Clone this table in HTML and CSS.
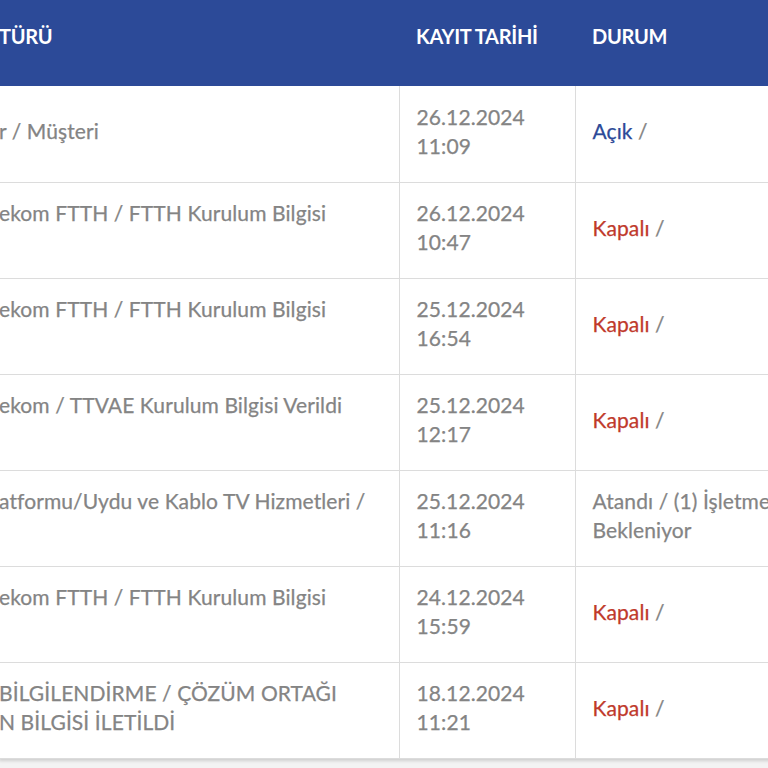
FILE: index.html
```html
<!DOCTYPE html>
<html lang="tr">
<head>
<meta charset="utf-8">
<link rel="stylesheet" href="styles.css">
</head>
<body>
<div class="viewport">
<table class="records">
  <colgroup>
    <col class="c-type">
    <col class="c-date">
    <col class="c-status">
  </colgroup>
  <thead>
    <tr>
      <th>TÜRÜ</th>
      <th>KAYIT TARİHİ</th>
      <th>DURUM</th>
    </tr>
  </thead>
  <tbody>
    <tr>
      <td class="type">r / Müşteri</td>
      <td class="date">26.12.2024<br>11:09</td>
      <td class="status"><span class="open">Açık</span> /</td>
    </tr>
    <tr>
      <td class="type">ekom FTTH / FTTH Kurulum Bilgisi<br>&nbsp;</td>
      <td class="date">26.12.2024<br>10:47</td>
      <td class="status"><span class="closed">Kapalı</span> /</td>
    </tr>
    <tr>
      <td class="type">ekom FTTH / FTTH Kurulum Bilgisi<br>&nbsp;</td>
      <td class="date">25.12.2024<br>16:54</td>
      <td class="status"><span class="closed">Kapalı</span> /</td>
    </tr>
    <tr>
      <td class="type">ekom / TTVAE Kurulum Bilgisi Verildi<br>&nbsp;</td>
      <td class="date">25.12.2024<br>12:17</td>
      <td class="status"><span class="closed">Kapalı</span> /</td>
    </tr>
    <tr>
      <td class="type">atformu/Uydu ve Kablo TV Hizmetleri /<br>&nbsp;</td>
      <td class="date">25.12.2024<br>11:16</td>
      <td class="status">Atandı / (1) İşletme<br>Bekleniyor</td>
    </tr>
    <tr>
      <td class="type">ekom FTTH / FTTH Kurulum Bilgisi<br>&nbsp;</td>
      <td class="date">24.12.2024<br>15:59</td>
      <td class="status"><span class="closed">Kapalı</span> /</td>
    </tr>
    <tr>
      <td class="type">BİLGİLENDİRME / ÇÖZÜM ORTAĞI<br>N BİLGİSİ İLETİLDİ</td>
      <td class="date">18.12.2024<br>11:21</td>
      <td class="status"><span class="closed">Kapalı</span> /</td>
    </tr>
  </tbody>
</table>
</div>
</body>
</html>
```

FILE: styles.css
```css
html, body {
  margin: 0;
  padding: 0;
  background: #f3f3f3;
  overflow: hidden;
}

.viewport {
  width: 768px;
  height: 768px;
  overflow: hidden;
}

.records {
  width: 1000px;
  margin-left: -1px;
  border-collapse: collapse;
  table-layout: fixed;
  background: #fff;
  font-family: Lato, "Open Sans", sans-serif;
  color: #848484;
  box-shadow: 0 2px 3px rgba(0, 0, 0, 0.15);
}

.c-type { width: 400px; }
.c-date { width: 176px; }
.c-status { width: 424px; }

.records thead th {
  background: #2c4a98;
  color: #fff;
  font-size: 20px;
  font-weight: 700;
  letter-spacing: -0.3px;
  text-align: left;
  vertical-align: top;
  height: 86px;
  box-sizing: border-box;
  padding: 25px 18px 0 17px;
  line-height: 22px;
}

.records thead th:first-child {
  padding-left: 0;
}

.records td {
  height: 96px;
  box-sizing: border-box;
  padding: 0 18px 6px 17px;
  font-size: 21px;
  line-height: 29px;
  letter-spacing: 0.1px;
  vertical-align: middle;
  border: 1px solid #dcdcdc;
  border-top: 0;
  -webkit-text-stroke: 0.25px currentColor;
}

.records td.type {
  padding-left: 0;
  border-left: 0;
  white-space: nowrap;
}

.records td.status {
  padding-left: 17px;
}

.open { color: #2c4a98; }
.closed { color: #c0392b; }
```
